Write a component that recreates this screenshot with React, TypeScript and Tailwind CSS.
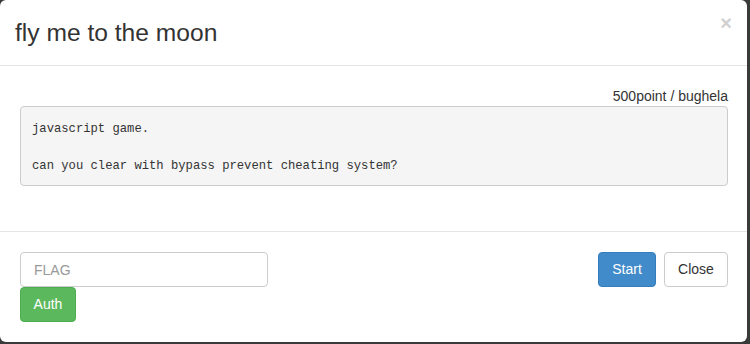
const App = () => {
  return (
    <div
      className="h-[344px] w-[750px] overflow-hidden bg-[#3a3a3a]"
      style={{ fontFamily: '"Liberation Sans", Arial, sans-serif' }}
    >
      <div className="flex h-[342px] w-[747px] flex-col rounded-[6px] bg-white text-[#333]">
        {/* header */}
        <div className="flex h-[66px] shrink-0 items-start justify-between border-b border-[#e5e5e5] pl-[15px] pr-[15px]">
          <h4 className="mt-[18px] text-[24.6px] leading-[30px]">fly me to the moon</h4>
          <button className="mt-[11px] text-[20px] font-bold leading-[24px] text-[#d0d0d0]">×</button>
        </div>

        {/* body */}
        <div className="flex h-[165px] shrink-0 flex-col px-[19px] pt-[20px]">
          <div className="text-right text-[14px] leading-[20px]">500point / bughela</div>
          <pre
            className="ml-[1px] rounded-[4px] border border-[#ccc] bg-[#f5f5f5] px-[11px] pb-[9px] pt-[13px] text-[12.2px] leading-[18.5px] text-[#333]"
            style={{ fontFamily: '"Liberation Mono", Consolas, monospace' }}
          >
            {"javascript game.\n\ncan you clear with bypass prevent cheating system?"}
          </pre>
        </div>

        {/* footer */}
        <div className="flex flex-1 items-start justify-between border-t border-[#e5e5e5] pl-[20px] pr-[19px] pt-[20px]">
          <div className="flex flex-col">
            <input
              placeholder="FLAG"
              className="h-[35px] w-[248px] rounded-[4px] border border-[#ccc] px-[13px] text-[14px] text-[#555] placeholder:text-[#999] outline-none"
            />
            <button className="h-[35px] w-[56px] rounded-[4px] border border-[#4cae4c] bg-[#5cb85c] text-[14px] text-white">
              Auth
            </button>
          </div>
          <div className="flex gap-[8px]">
            <button className="h-[35px] w-[58px] rounded-[4px] border border-[#357ebd] bg-[#428bca] text-[14px] text-white">
              Start
            </button>
            <button className="h-[35px] w-[64px] rounded-[4px] border border-[#ccc] bg-white text-[14px] text-[#333]">
              Close
            </button>
          </div>
        </div>
      </div>
    </div>
  );
};

export default App;
